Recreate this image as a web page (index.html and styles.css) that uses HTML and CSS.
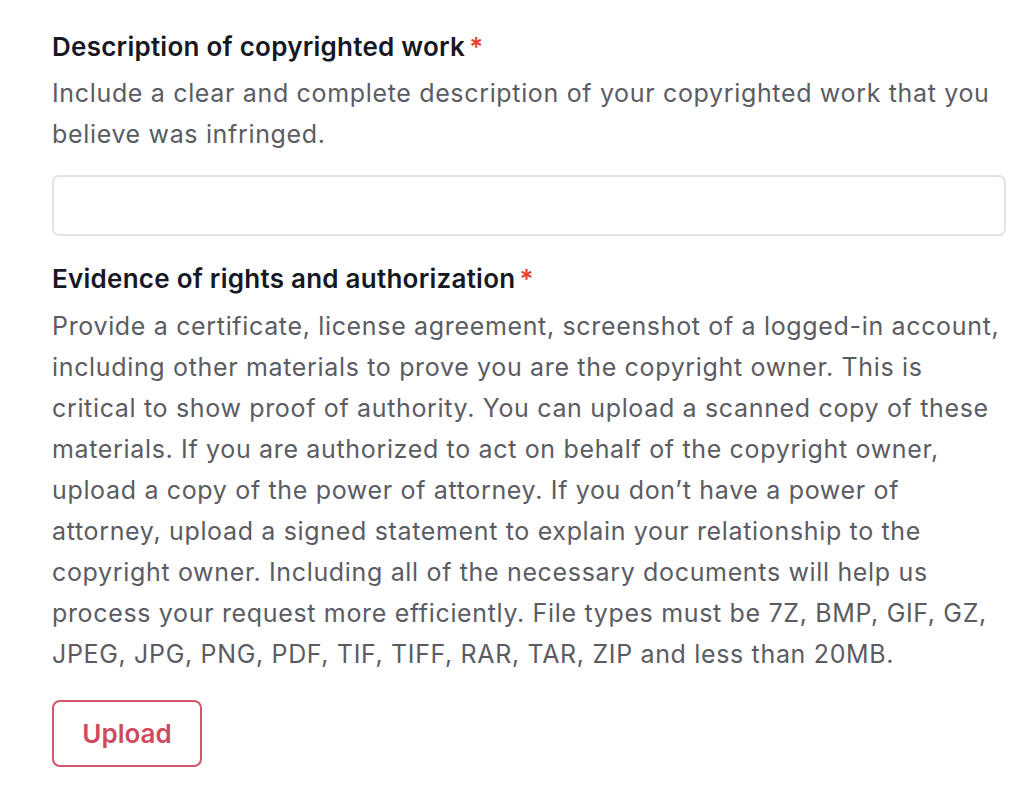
FILE: index.html
```html
<!DOCTYPE html>
<html lang="en">
<head>
<meta charset="utf-8">
<title>Copyright form</title>
<link rel="stylesheet" href="styles.css">
</head>
<body>
<main class="form">
  <section class="field">
    <h2 class="label">Description of copyrighted work<span class="req">*</span></h2>
    <p class="help">Include a clear and complete description of your copyrighted work that you believe was infringed.</p>
    <input class="input" type="text" aria-label="Description of copyrighted work">
  </section>
  <section class="field">
    <h2 class="label">Evidence of rights and authorization<span class="req">*</span></h2>
    <p class="help">Provide a certificate, license agreement, screenshot of a logged-in account, including other materials to prove you are the copyright owner. This is critical to show proof of authority. You can upload a scanned copy of these materials. If you are authorized to act on behalf of the copyright owner, upload a copy of the power of attorney. If you don’t have a power of attorney, upload a signed statement to explain your relationship to the copyright owner. Including all of the necessary documents will help us process your request more efficiently. File types must be 7Z, BMP, GIF, GZ, JPEG, JPG, PNG, PDF, TIF, TIFF, RAR, TAR, ZIP and less than 20MB.</p>
    <button class="upload" type="button">Upload</button>
  </section>
</main>
</body>
</html>
```
FILE: styles.css
```css
html, body {
  margin: 0;
  padding: 0;
  background: #ffffff;
}
body {
  font-family: Inter, "Liberation Sans", sans-serif;
  color: #161823;
}
.form {
  width: 954px;
  padding: 28px 0 0 52px;
}
.field {
  display: flex;
  flex-direction: column;
  align-items: flex-start;
}
.label {
  margin: 0;
  font-size: 26px;
  font-weight: 600;
  letter-spacing: 0.25px;
  line-height: 38px;
  color: #161823;
}
.req {
  color: #e5402f;
  margin-left: 4px;
}
.help {
  margin: 7px 0 0;
  font-size: 25px;
  letter-spacing: 0.66px;
  line-height: 41px;
  color: #5b5c63;
}
.field + .field .help {
  margin-top: 8px;
}
.input {
  box-sizing: border-box;
  width: 954px;
  height: 61px;
  margin: 20px 0 24px;
  border: 2px solid #e3e3e4;
  border-radius: 7px;
  background: #fff;
}
.upload {
  margin-top: 25px;
  width: 150px;
  height: 67px;
  border: 2px solid #d3566a;
  border-radius: 8px;
  background: #fff;
  color: #d04a5f;
  font-family: Inter, "Liberation Sans", sans-serif;
  font-size: 26px;
  font-weight: 600;
}
```
